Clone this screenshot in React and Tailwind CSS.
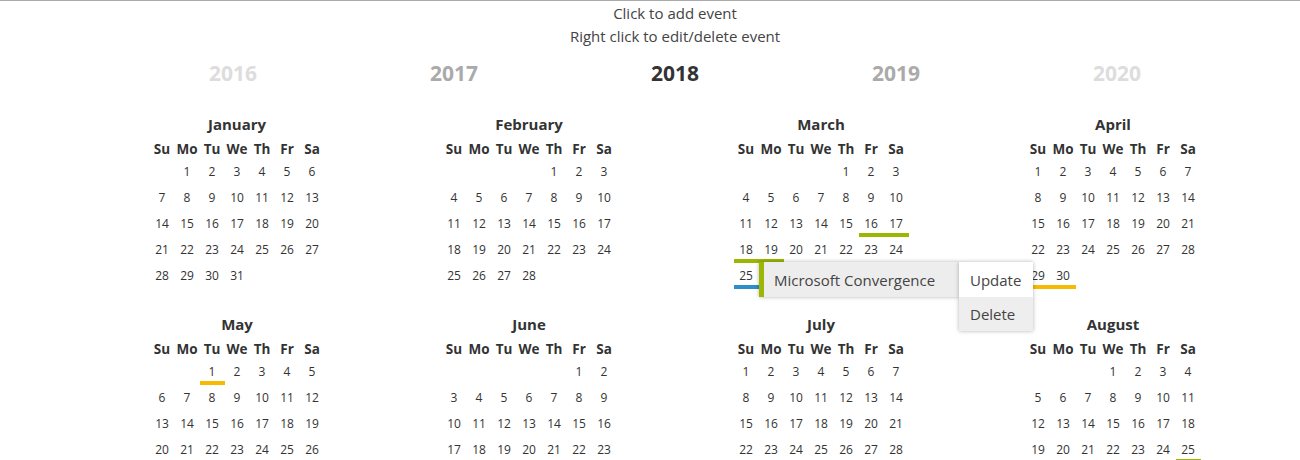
import { useMemo } from 'react'

const YEAR = 2018
const MONTHS = ['January', 'February', 'March', 'April', 'May', 'June', 'July', 'August', 'September', 'October', 'November', 'December']
const WEEK = ['Su', 'Mo', 'Tu', 'We', 'Th', 'Fr', 'Sa']

const YEARS = [
  { year: 2016, cls: 'text-[#ddd]' },
  { year: 2017, cls: 'text-[#aaa]' },
  { year: 2018, cls: 'text-[#333]' },
  { year: 2019, cls: 'text-[#aaa]' },
  { year: 2020, cls: 'text-[#ddd]' },
]

// underline per event colour
const LINE = {
  green: 'shadow-[inset_0_-4px_0_0_#9cb703]',
  blue: 'shadow-[inset_0_-4px_0_0_#2c8fc9]',
  yellow: 'shadow-[inset_0_-4px_0_0_#f5bb00]',
}

// "month-day" -> colour
const EVENTS = {
  '2-16': 'green', '2-17': 'green', '2-18': 'green', '2-19': 'green',
  '2-25': 'blue', '2-26': 'blue',
  '3-29': 'yellow', '3-30': 'yellow', '4-1': 'yellow',
  '7-25': 'green',
}

function Month({ m }) {
  const cells = useMemo(() => {
    const first = new Date(YEAR, m, 1).getDay()
    const count = new Date(YEAR, m + 1, 0).getDate()
    const out = Array.from({ length: first }, () => null)
    for (let d = 1; d <= count; d++) out.push(d)
    return out
  }, [m])

  return (
    <div className="h-[200px] flex justify-center">
      <div className="w-[175px]">
        <div className="h-[26px] flex items-center justify-center text-[15px] font-bold text-[#333]">
          {MONTHS[m]}
        </div>
        <div className="mt-[2px] grid grid-cols-7 h-[20px] items-center text-[13.5px] font-bold text-[#333]">
          {WEEK.map(w => (
            <div key={w} className="text-center">{w}</div>
          ))}
        </div>
        <div className="grid grid-cols-7">
          {cells.map((d, i) => {
            const ev = d && EVENTS[`${m}-${d}`]
            return (
              <div
                key={i}
                className={`h-[26px] flex items-center justify-center text-[12px] text-[#333] ${ev ? LINE[ev] : ''}`}
              >
                {d}
              </div>
            )
          })}
        </div>
      </div>
    </div>
  )
}

function ContextMenu() {
  return (
    <div className="absolute left-[759px] top-[262px] flex items-start text-[15px] text-[#444]">
      <div className="w-[200px] h-[35px] flex items-center bg-[#ededed] border-l-[5px] border-[#9cb703] pl-[10px] pt-px shadow-[0_0_4px_rgba(0,0,0,0.3)]">
        Microsoft Convergence
      </div>
      <div className="w-[74px] bg-white shadow-[0_0_4px_rgba(0,0,0,0.3)]">
        <div className="h-[35px] flex items-center pl-[11px] pt-px">Update</div>
        <div className="h-[34px] flex items-center pl-[11px] bg-[#eee]">Delete</div>
      </div>
    </div>
  )
}

export default function App() {
  return (
    <div className="relative w-[1300px] h-[460px] overflow-hidden bg-white font-['Open_Sans',sans-serif]">
      <div className="h-px bg-[#aaa]" />

      <div className="ml-[91px] w-[1168px]">
        {/* instructions */}
        <div className="pt-px text-center text-[15px] leading-[23px] text-[#444]">
          <div>Click to add event</div>
          <div>Right click to edit/delete event</div>
        </div>

        {/* year switcher */}
        <div className="h-[52px] flex items-center justify-center">
          {YEARS.map(y => (
            <div key={y.year} className={`w-[221px] text-center text-[21px] font-bold ${y.cls}`}>
              {y.year}
            </div>
          ))}
        </div>

        {/* months */}
        <div className="mt-[11px] grid grid-cols-4">
          {MONTHS.map((_, m) => (
            <Month key={m} m={m} />
          ))}
        </div>
      </div>

      <ContextMenu />
    </div>
  )
}
